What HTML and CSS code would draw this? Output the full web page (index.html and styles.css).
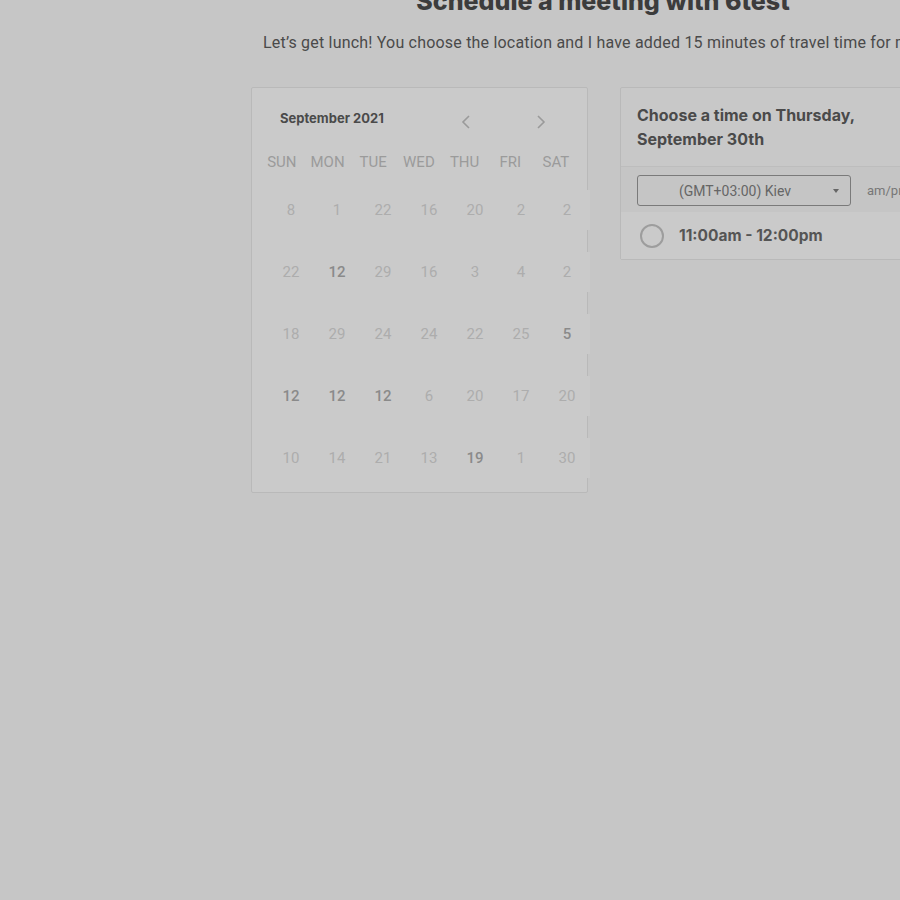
FILE: index.html
```html
<!DOCTYPE html>
<html>
<head>
<meta charset="utf-8">
<link rel="stylesheet" href="styles.css">
</head>
<body>
<div class="page">
  <h1 class="title">Schedule a meeting with 6test</h1>
  <p class="subtitle">Let’s get lunch! You choose the location and I have added 15 minutes of travel time for me to get there.</p>
  <div class="columns">
    <div class="cal">
      <div class="cal-head">
        <span class="month">September 2021</span>
        <div class="arrows">
          <span class="arrow"><svg width="10" height="16" viewBox="0 0 10 16"><path d="M8 2 L2 8 L8 14" fill="none" stroke="#9a9a9a" stroke-width="1.6"/></svg></span>
          <span class="arrow"><svg width="10" height="16" viewBox="0 0 10 16"><path d="M2 2 L8 8 L2 14" fill="none" stroke="#9a9a9a" stroke-width="1.6"/></svg></span>
        </div>
      </div>
      <div class="dow">
        <span>SUN</span><span>MON</span><span>TUE</span><span>WED</span><span>THU</span><span>FRI</span><span>SAT</span>
      </div>
      <div class="weeks">
        <span>8</span><span>1</span><span>22</span><span>16</span><span>20</span><span>2</span><span>2</span>
        <span>22</span><span class="b">12</span><span>29</span><span>16</span><span>3</span><span>4</span><span>2</span>
        <span>18</span><span>29</span><span>24</span><span>24</span><span>22</span><span>25</span><span class="b">5</span>
        <span class="b">12</span><span class="b">12</span><span class="b">12</span><span>6</span><span>20</span><span>17</span><span>20</span>
        <span>10</span><span>14</span><span>21</span><span>13</span><span class="b">19</span><span>1</span><span>30</span>
      </div>
    </div>
    <div class="times">
      <div class="times-head">Choose a time on Thursday, September 30th</div>
      <div class="tz-row">
        <div class="tz-select">(GMT+03:00) Kiev<span class="caret"></span></div>
        <span class="ampm">am/pm</span>
      </div>
      <div class="slot">
        <span class="radio"></span>
        <span class="slot-text">11:00am - 12:00pm</span>
      </div>
    </div>
  </div>
</div>
</body>
</html>
```
FILE: styles.css
```css
html, body {
  margin: 0;
  padding: 0;
  background: #c6c6c6;
  overflow: hidden;
  height: 900px;
}
.page {
  margin-left: 251px;
  width: 704px;
  font-family: Roboto, "Liberation Sans", sans-serif;
}
.title {
  margin: -12px 0 0 0;
  font-family: Inter, "Liberation Sans", sans-serif;
  font-weight: 800;
  font-size: 25px;
  line-height: 26px;
  text-align: center;
  color: #3c3c3c;
  white-space: nowrap;
}
.subtitle {
  margin: 19px 0 0 12px;
  font-size: 16px;
  letter-spacing: 0.2px;
  line-height: 20px;
  color: #4a4a4a;
  white-space: nowrap;
}
.columns {
  display: flex;
  gap: 32px;
  margin-top: 34px;
  align-items: flex-start;
}
.cal {
  width: 337px;
  box-sizing: border-box;
  border: 1px solid #b9b9b9;
  border-radius: 2px;
  background: #cacaca;
  padding: 18px 0 14px 0;
  flex-shrink: 0;
}
.cal-head {
  display: flex;
  align-items: flex-start;
  padding: 0 31px 0 28px;
  height: 24px;
}
.month {
  font-family: Inter, "Liberation Sans", sans-serif;
  font-weight: 700;
  font-size: 13px;
  line-height: 24px;
  color: #4a4a4a;
}
.arrows {
  margin-left: auto;
  display: flex;
  gap: 45px;
  margin-top: 8px;
}
.arrow {
  width: 30px;
  height: 16px;
  display: flex;
  justify-content: center;
}
.dow {
  display: grid;
  grid-template-columns: repeat(7, 45.7px);
  margin: 20px 0 0 7px;
  font-size: 15px;
  line-height: 24px;
  color: #9b9b9b;
  text-align: center;
}
.weeks {
  display: grid;
  grid-template-columns: repeat(7, 46px);
  grid-auto-rows: 40px;
  row-gap: 22px;
  margin: 16px -2px 0 16px;
  font-size: 15px;
  color: #adadad;
}
.weeks span {
  display: flex;
  align-items: center;
  justify-content: center;
  background: #cacaca;
}
.weeks span.b {
  color: #8a8a8a;
  font-weight: 500;
}
.times {
  width: 335px;
  flex-shrink: 0;
  box-sizing: border-box;
  border: 1px solid #b9b9b9;
  border-radius: 2px;
  background: #c8c8c8;
}
.times-head {
  padding: 15px 40px 15px 16px;
  font-family: Inter, "Liberation Sans", sans-serif;
  font-weight: 700;
  font-size: 16px;
  line-height: 24px;
  color: #4a4a4a;
  border-bottom: 1px solid #bdbdbd;
}
.tz-row {
  display: flex;
  align-items: center;
  padding: 8px 16px 6px 16px;
  background: #c5c5c5;
}
.tz-select {
  width: 214px;
  height: 31px;
  box-sizing: border-box;
  border: 1px solid #7a7a7a;
  border-radius: 3px;
  display: flex;
  align-items: center;
  justify-content: center;
  padding-right: 18px;
  position: relative;
  font-size: 14px;
  color: #666;
}
.caret {
  position: absolute;
  right: 11px;
  top: 13px;
  width: 0;
  height: 0;
  border-left: 3.5px solid transparent;
  border-right: 3.5px solid transparent;
  border-top: 4px solid #666;
}
.ampm {
  margin-left: 16px;
  font-size: 13px;
  color: #777;
}
.slot {
  display: flex;
  align-items: center;
  height: 47px;
  padding-left: 19px;
  background: #cacaca;
}
.radio {
  width: 20px;
  height: 20px;
  border: 2px solid #9d9d9d;
  border-radius: 50%;
  flex-shrink: 0;
}
.slot-text {
  margin-left: 15px;
  font-family: Inter, "Liberation Sans", sans-serif;
  font-weight: 700;
  font-size: 15.5px;
  color: #555;
}
```
